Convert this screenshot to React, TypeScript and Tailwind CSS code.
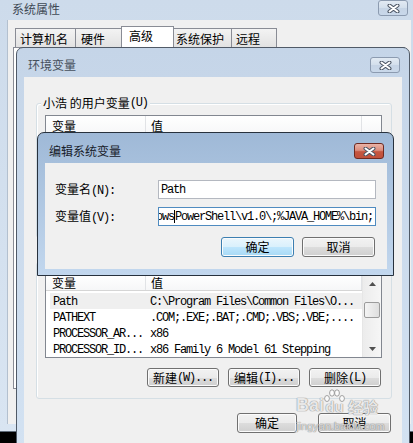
import React from "react";

const M = ({ children }: { children: React.ReactNode }) => (
  <span className="font-['Liberation_Mono',monospace] tracking-[-1.2px]">{children}</span>
);

const CloseGlyph = () => (
  <svg width="13" height="9" viewBox="0 0 13 9">
    <path d="M2.5 1.5L10.5 7.5M10.5 1.5L2.5 7.5" stroke="#4b5564" strokeWidth="4" strokeLinecap="round" />
    <path d="M2.5 1.5L10.5 7.5M10.5 1.5L2.5 7.5" stroke="#ffffff" strokeWidth="2" strokeLinecap="round" />
  </svg>
);

const CloseButton = ({ active }: { active?: boolean }) => (
  <div
    className={
      active
        ? "w-[30px] h-[16px] rounded-[3px] border border-[#6e2a21] bg-[linear-gradient(#e9b3a7_0%,#dc8e7e_45%,#c55640_55%,#c0503b_100%)] flex items-center justify-center"
        : "w-[30px] h-[16px] rounded-[3px] border border-[#8c9bb0] bg-[linear-gradient(#e2eaf3_0%,#d3dfec_50%,#c6d4e5_50%,#c9d8ea_100%)] flex items-center justify-center"
    }
  >
    <CloseGlyph />
  </div>
);

const Button = ({ size, primary, children }: { size: string; primary?: boolean; children: React.ReactNode }) => (
  <div
    className={`${size} rounded-[3px] border flex items-center justify-center leading-none text-black shadow-[inset_0_0_0_1px_#fbfbfb] ${
      primary
        ? "border-[#3c7fb1] bg-[linear-gradient(#eaf6fd_0%,#d9f0fc_50%,#bee6fd_50%,#a7d9f5_100%)]"
        : "border-[#707070] bg-[linear-gradient(#f2f2f2_0%,#ebebeb_50%,#dddddd_50%,#cfcfcf_100%)]"
    }`}
  >
    {children}
  </div>
);

const Arrow = ({ down }: { down?: boolean }) => (
  <svg width="7" height="4" viewBox="0 0 7 4">
    <path d={down ? "M0 0H7L3.5 4Z" : "M0 4H7L3.5 0Z"} fill="#505050" />
  </svg>
);

const ListHeader = ({ filler }: { filler?: boolean }) => (
  <div className="flex h-[20px] border-b border-[#d5d5d5] bg-linear-to-b from-white to-[#f6f7f8] leading-none">
    <div className="w-[100px] shrink-0 border-r border-[#e1e3e6] pl-[6px] flex items-center">变量</div>
    <div className="w-[216px] shrink-0 border-r border-[#e1e3e6] pl-[5px] flex items-center">值</div>
    {filler && <div className="flex-1" />}
  </div>
);

const userVars = [
  ["TEMP", "%USERPROFILE%\\AppData\\Local\\Temp"],
  ["TMP", "%USERPROFILE%\\AppData\\Local\\Temp"],
];

const systemVars = [
  ["Path", "C:\\Program Files\\Common Files\\O..."],
  ["PATHEXT", ".COM;.EXE;.BAT;.CMD;.VBS;.VBE;...."],
  ["PROCESSOR_AR...", "x86"],
  ["PROCESSOR_ID...", "x86 Family 6 Model 61 Stepping"],
];

const tabs = [
  { label: "计算机名", cls: "w-[61px] h-[19px] pl-[4px]" },
  { label: "硬件", cls: "w-[47px] h-[19px] pl-[5px]" },
  { label: "高级", cls: "w-[53px] h-[21px] pl-[7px]", selected: true },
  { label: "系统保护", cls: "w-[59px] h-[19px] pl-[2px]" },
  { label: "远程", cls: "w-[46px] h-[19px] pl-[4px]" },
];

const SystemProperties = () => (
  <div className="absolute left-0 top-0 w-[418px] h-[432px] flex flex-col bg-linear-to-b from-[#cddbeb] to-[#d9e5f2] border-b border-[#5f6b79]">
    <div className="h-[20px] shrink-0 flex items-start">
      <span className="ml-[12px] mt-[1px] h-[16px] flex items-center text-[#3f4955]">系统属性</span>
      <div className="ml-auto mr-[10px]">
        <CloseButton />
      </div>
    </div>
    <div className="mx-[7px] mb-[7px] flex-1 flex flex-col bg-[#f0f0f0] border-l border-[#b3c0cf]">
      <div className="flex items-end pt-[6px] pl-[7px] h-[27px]">
        {tabs.map((t, i) => (
          <div
            key={t.label}
            className={`${t.cls} ${i > 0 ? "-ml-px" : ""} flex items-center border border-b-0 leading-none ${
              t.selected
                ? "relative z-10 border-[#898c95] bg-white pb-[3px]"
                : "border-[#898c95] bg-linear-to-b from-[#f3f3f3] to-[#e2e2e2] pt-[1px]"
            }`}
          >
            {t.label}
          </div>
        ))}
      </div>
      <div className="ml-[5px] mr-[6px] h-[342px] border border-[#898c95] bg-white" />
    </div>
  </div>
);

const EnvironmentVariables = () => (
  <div className="absolute left-[16px] top-[47px] w-[394px] h-[410px] flex flex-col rounded-t-[7px] border border-[#505a67] bg-linear-to-b from-[#c5d5e8] to-[#d3e2f2]">
    <div className="h-[29px] shrink-0 flex items-start pt-[9px]">
      <span className="ml-[11px] h-[16px] flex items-center text-[#46505c]">环境变量</span>
      <div className="ml-auto mr-[9px]">
        <CloseButton />
      </div>
    </div>
    <div className="mx-[7px] flex-1 flex flex-col bg-[#f0f0f0]">
      <div className="relative ml-[12px] mt-[26px] w-[356px] h-[135px] shrink-0 rounded-[3px] border border-[#d5dfe5] shadow-[inset_1px_1px_0_#ffffff]">
        <span className="absolute left-[4px] -top-[8px] h-[14px] px-[2px] bg-[#f0f0f0] flex items-center leading-none">
          小浩 的用户变量<M>(U)</M>
        </span>
        <div className="ml-[8px] mt-[11px] w-[337px] h-[87px] border border-[#828790] bg-white flex flex-col">
          <ListHeader filler />
          <div className="pt-[2px] leading-none">
            {userVars.map(([k, v]) => (
              <div key={k} className="flex h-[16px] items-center ml-[4px] whitespace-nowrap">
                <span className="w-[96px] pl-[3px]"><M>{k}</M></span>
                <span className="pl-[4px]"><M>{v}</M></span>
              </div>
            ))}
          </div>
        </div>
        <div className="flex justify-end gap-[9px] mt-[9px] pr-[10px] h-[19px]">
          <Button size="w-[72px] h-[19px]">新建<M>(N)...</M></Button>
          <Button size="w-[72px] h-[19px]">编辑<M>(E)...</M></Button>
          <Button size="w-[72px] h-[19px]">删除<M>(D)</M></Button>
        </div>
      </div>

      <div className="relative ml-[12px] mt-[24px] w-[356px] h-[137px] shrink-0 rounded-[3px] border border-[#d5dfe5] shadow-[inset_1px_1px_0_#ffffff]">
        <span className="absolute left-[4px] -top-[8px] h-[14px] px-[2px] bg-[#f0f0f0] flex items-center leading-none">
          系统变量<M>(S)</M>
        </span>
        <div className="ml-[8px] mt-[11px] w-[337px] h-[84px] border border-[#828790] bg-white flex overflow-hidden">
          <div className="w-[316px] shrink-0 flex flex-col">
            <ListHeader />
            <div className="pt-[2px] leading-none">
              {systemVars.map(([k, v], i) => (
                <div
                  key={k}
                  className={`flex h-[16px] items-center ml-[4px] whitespace-nowrap overflow-hidden ${i === 0 ? "bg-[#efefef]" : ""}`}
                >
                  <span className="w-[96px] shrink-0 pl-[3px]"><M>{k}</M></span>
                  <span className="pl-[4px]"><M>{v}</M></span>
                </div>
              ))}
            </div>
          </div>
          <div className="flex-1 flex flex-col bg-linear-to-r from-[#ececec] to-[#f6f6f6] border-l border-[#e6e6e6]">
            <div className="h-[17px] flex items-center justify-center">
              <Arrow />
            </div>
            <div className="mt-[10px] mx-[1px] h-[16px] rounded-[2px] border border-[#9b9b9b] bg-linear-to-r from-[#f4f4f4] to-[#dedede]" />
            <div className="flex-1" />
            <div className="h-[17px] flex items-center justify-center">
              <Arrow down />
            </div>
          </div>
        </div>
        <div className="flex justify-end gap-[9px] mt-[10px] pr-[10px]">
          <Button size="w-[72px] h-[19px]">新建<M>(W)...</M></Button>
          <Button size="w-[72px] h-[19px]">编辑<M>(I)...</M></Button>
          <Button size="w-[72px] h-[19px]">删除<M>(L)</M></Button>
        </div>
      </div>

      <div className="flex justify-end gap-[21px] mt-[14px] pr-[11px]">
        <Button size="w-[60px] h-[20px]">确定</Button>
        <Button size="w-[73px] h-[20px]">取消</Button>
      </div>
    </div>
  </div>
);

const EditDialog = () => (
  <div className="absolute left-[37px] top-[132px] w-[357px] h-[144px] flex flex-col rounded-t-[7px] border border-[#27313d] bg-linear-to-b from-[#9fb9d7] to-[#c2d7ee]">
    <div className="h-[30px] shrink-0 flex items-start pt-[10px]">
      <span className="ml-[11px] h-[16px] flex items-center text-[#18202a]">编辑系统变量</span>
      <div className="ml-auto mr-[9px]">
        <CloseButton active />
      </div>
    </div>
    <div className="ml-[7px] mr-[6px] mb-[6px] flex-1 flex flex-col bg-[#f0f0f0] pt-[17px]">
      <div className="flex items-center h-[19px]">
        <span className="w-[113px] pl-[10px] leading-none">变量名<M>(N):</M></span>
        <div className="w-[218px] h-[19px] border border-[#b4b8c0] bg-white flex items-center pl-[2px] leading-none">
          <M>Path</M>
        </div>
      </div>
      <div className="flex items-center h-[19px] mt-[8px]">
        <span className="w-[113px] pl-[10px] leading-none">变量值<M>(V):</M></span>
        <div className="w-[218px] h-[19px] border border-[#4f8bc0] bg-white flex items-center justify-end overflow-hidden pr-[2px] leading-none whitespace-nowrap">
          <span className="shrink-0 flex items-center">
            <M>dows</M>
            <span className="inline-block w-px h-[13px] bg-black" />
            <M>PowerShell\v1.0\;%JAVA_HOME%\bin;</M>
          </span>
        </div>
      </div>
      <div className="flex justify-end gap-[8px] mt-[11px] pr-[12px]">
        <Button size="w-[73px] h-[20px]" primary>确定</Button>
        <Button size="w-[73px] h-[20px]">取消</Button>
      </div>
    </div>
  </div>
);

const Watermark = () => (
  <div className="absolute left-[296px] top-[389px] flex flex-col text-white/80 [text-shadow:0_0_1px_#858585,0_0_1px_#858585] pointer-events-none">
    <div className="flex items-end h-[25px]">
      <span className="font-['Liberation_Sans',sans-serif] font-bold text-[18px] leading-none">Bai</span>
      <span className="relative w-[21px] h-[25px] flex items-end justify-center">
        <svg className="absolute left-0 top-0" width="21" height="14" viewBox="0 0 21 14">
          <g fill="#ffffff" fillOpacity="0.8" stroke="#8a8a8a" strokeWidth="0.8">
            <ellipse cx="3" cy="9.5" rx="2.4" ry="3" />
            <ellipse cx="8" cy="4" rx="2.4" ry="3.2" />
            <ellipse cx="13" cy="4" rx="2.4" ry="3.2" />
            <ellipse cx="18" cy="9.5" rx="2.4" ry="3" />
          </g>
        </svg>
        <span className="font-['Liberation_Sans',sans-serif] font-bold text-[15px] leading-none">du</span>
      </span>
      <span className="ml-[3px] font-bold text-[15px] leading-none">经验</span>
    </div>
    <span className="mt-[7px] font-['Liberation_Sans',sans-serif] text-[11px] leading-none text-white/70">
      jingyan.baidu.com
    </span>
  </div>
);

export default function App() {
  return (
    <div className="relative w-[413px] h-[443px] overflow-hidden bg-black font-['Noto_Sans_CJK_SC',sans-serif] text-[12px] text-black">
      <SystemProperties />
      <EnvironmentVariables />
      <EditDialog />
      <Watermark />
    </div>
  );
}
